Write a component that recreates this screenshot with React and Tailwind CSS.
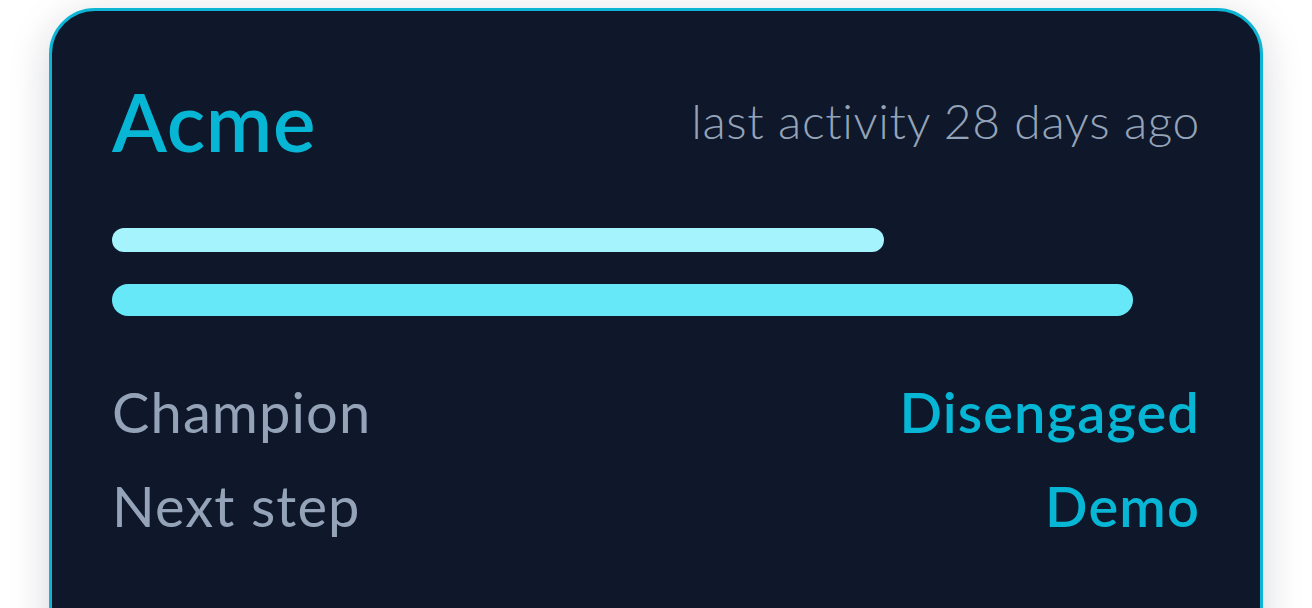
import React from 'react';

const deal = {
  name: 'Acme',
  lastActivity: 'last activity 28 days ago',
  bars: [
    { pct: 71, className: 'h-[24px] bg-[#a5f3fc]' },
    { pct: 93.8, className: 'h-[32px] bg-[#67e8f9]' },
  ],
  rows: [
    { label: 'Champion', value: 'Disengaged' },
    { label: 'Next step', value: 'Demo' },
  ],
};

const DealCard = ({ deal }) => (
  <div className="rounded-[46px] border-[3px] border-[#0db4d3] bg-[#0f172a] px-[60px] pt-[70px] pb-[140px] shadow-[0_10px_40px_rgba(15,23,42,0.18)]">
    <div className="flex items-center justify-between">
      <h2 className="text-[80px] font-semibold leading-none tracking-[0.01em] text-[#06b6d4]">{deal.name}</h2>
      <span className="text-[48px] font-light leading-none tracking-[0.013em] text-[#94a3b8]">{deal.lastActivity}</span>
    </div>

    <div className="mt-[67px] flex flex-col gap-[32px]">
      {deal.bars.map((b, i) => (
        <div key={i} className={`rounded-full ${b.className}`} style={{ width: `${b.pct}%` }} />
      ))}
    </div>

    <div className="mt-[68px] flex flex-col gap-[38px]">
      {deal.rows.map((r) => (
        <div key={r.label} className="flex items-center justify-between text-[56px] leading-none tracking-[0.02em]">
          <span className="text-[#94a3b8]">{r.label}</span>
          <span className="font-semibold text-[#06b6d4]">{r.value}</span>
        </div>
      ))}
    </div>
  </div>
);

export default function App() {
  return (
    <div className="h-[608px] overflow-hidden bg-white px-[49px] pt-[8px] font-['Lato',sans-serif]">
      <DealCard deal={deal} />
    </div>
  );
}
